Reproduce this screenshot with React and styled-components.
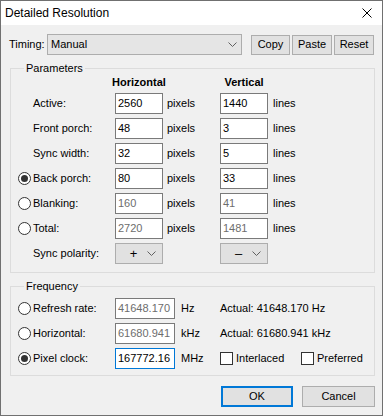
import { Fragment } from "react";
import styled, { createGlobalStyle } from "styled-components";

const GlobalStyle = createGlobalStyle`
  html, body {
    margin: 0;
    padding: 0;
    background: #f0f0f0;
  }
  body {
    font-family: "Liberation Sans", Arial, sans-serif;
    font-size: 11px;
    line-height: 13px;
    color: #000;
  }
`;

const Window = styled.div`
  box-sizing: border-box;
  width: 383px;
  height: 416px;
  border: 1px solid #707070;
  background: #f0f0f0;
  display: flex;
  flex-direction: column;
`;

const TitleBar = styled.div`
  height: 24px;
  background: #fff;
  display: flex;
  align-items: center;
  justify-content: space-between;
  padding: 0 10px 0 4px;
  font-size: 12px;
`;

const Body = styled.div`
  flex: 1;
  display: flex;
  flex-direction: column;
  padding: 9px 7px 0 8px;
`;

const TimingRow = styled.div`
  display: flex;
  align-items: center;
  height: 21px;
`;

const TimingLabel = styled.span`
  width: 38px;
`;

const Combo = styled.div`
  box-sizing: border-box;
  width: 195px;
  height: 21px;
  border: 1px solid #adadad;
  background: #e5e5e5;
  display: flex;
  align-items: center;
  justify-content: space-between;
  padding: 0 4px 0 3px;
  margin-right: 9px;
`;

const SmallButton = styled.div`
  box-sizing: border-box;
  width: ${(p) => p.$w}px;
  height: 20px;
  border: 1px solid #adadad;
  background: #e1e1e1;
  display: flex;
  align-items: center;
  justify-content: center;
  margin-left: ${(p) => p.$ml || 0}px;
`;

const Group = styled.fieldset`
  margin: ${(p) => p.$mt}px 0 0 1px;
  padding: ${(p) => p.$pt}px 0 ${(p) => p.$pb}px 7px;
  border: 1px solid #dcdcdc;
  min-width: 0;
`;

const Legend = styled.legend`
  margin-left: 6px;
  padding: 0 2px;
  line-height: 13px;
`;

const Grid = styled.div`
  display: grid;
  grid-template-columns: ${(p) => p.$cols};
  grid-template-rows: ${(p) => p.$rows};
  row-gap: 4px;
  align-items: center;
`;

const Header = styled.div`
  grid-column: ${(p) => p.$col};
  display: flex;
  justify-content: center;
  font-weight: bold;
  white-space: nowrap;
`;

const Label = styled.span`
  grid-column: 2;
  white-space: nowrap;
`;

const Unit = styled.span`
  padding-left: ${(p) => p.$pl}px;
  white-space: nowrap;
`;

const Field = styled.div`
  box-sizing: border-box;
  width: ${(p) => p.$w}px;
  height: 21px;
  border: 1px solid ${(p) => (p.$focus ? "#0078d7" : "#7a7a7a")};
  background: #fff;
  color: ${(p) => (p.$disabled ? "#6d6d6d" : "#000")};
  padding: 0 2px;
  line-height: 19px;
  white-space: nowrap;
  overflow: hidden;
`;

const Select = styled.div`
  box-sizing: border-box;
  width: 48px;
  height: 21px;
  border: 1px solid #adadad;
  background: #e1e1e1;
  display: flex;
  align-items: center;
  padding: 0 6px 0 0;
`;

const SelectValue = styled.span`
  flex: 1;
  text-align: center;
  font-size: 13px;
  padding-left: 4px;
`;

const Radio = styled.span`
  grid-column: 1;
  box-sizing: border-box;
  width: 13px;
  height: 13px;
  border-radius: 50%;
  border: 1px solid #333;
  background: #fff;
  display: flex;
  align-items: center;
  justify-content: center;
  &::after {
    content: "";
    display: ${(p) => (p.$checked ? "block" : "none")};
    width: 7px;
    height: 7px;
    border-radius: 50%;
    background: #333;
  }
`;

const CheckRow = styled.div`
  display: flex;
  align-items: center;
`;

const CheckItem = styled.label`
  display: flex;
  align-items: center;
  gap: 3px;
  width: ${(p) => p.$w}px;
`;

const Box = styled.span`
  box-sizing: border-box;
  width: 13px;
  height: 13px;
  border: 1px solid #333;
  background: #fff;
`;

const ButtonRow = styled.div`
  display: flex;
  justify-content: flex-end;
  gap: 9px;
  margin-top: 10px;
`;

const DialogButton = styled.div`
  box-sizing: border-box;
  width: ${(p) => p.$w}px;
  height: 21px;
  border: ${(p) => (p.$default ? "2px solid #0078d7" : "1px solid #adadad")};
  background: #e1e1e1;
  display: flex;
  align-items: center;
  justify-content: center;
`;

function Chevron() {
  return (
    <svg width="9" height="5" viewBox="0 0 9 5">
      <polyline points="0.5,0.5 4.5,4.5 8.5,0.5" fill="none" stroke="#606060" strokeWidth="1" />
    </svg>
  );
}

function CloseIcon() {
  return (
    <svg width="10" height="10" viewBox="0 0 10 10">
      <path d="M0.5 0.5 L9.5 9.5 M9.5 0.5 L0.5 9.5" stroke="#000" strokeWidth="1" />
    </svg>
  );
}

const params = [
  { label: "Active:", h: "2560", v: "1440" },
  { label: "Front porch:", h: "48", v: "3" },
  { label: "Sync width:", h: "32", v: "5" },
  { label: "Back porch:", h: "80", v: "33", radio: true, checked: true },
  { label: "Blanking:", h: "160", v: "41", radio: true, disabled: true },
  { label: "Total:", h: "2720", v: "1481", radio: true, disabled: true },
];

const freqs = [
  { label: "Refresh rate:", value: "41648.170", unit: "Hz", actual: "Actual: 41648.170 Hz", disabled: true },
  { label: "Horizontal:", value: "61680.941", unit: "kHz", actual: "Actual: 61680.941 kHz", disabled: true },
  { label: "Pixel clock:", value: "167772.16", unit: "MHz", checked: true, focus: true },
];

export default function App() {
  return (
    <>
      <GlobalStyle />
      <Window>
        <TitleBar>
          <span>Detailed Resolution</span>
          <CloseIcon />
        </TitleBar>
        <Body>
          <TimingRow>
            <TimingLabel>Timing:</TimingLabel>
            <Combo>
              <span>Manual</span>
              <Chevron />
            </Combo>
            <SmallButton $w={39}>Copy</SmallButton>
            <SmallButton $w={40} $ml={2}>Paste</SmallButton>
            <SmallButton $w={40} $ml={2}>Reset</SmallButton>
          </TimingRow>

          <Group $mt={7} $pt={0} $pb={8}>
            <Legend>Parameters</Legend>
            <Grid $cols="15px 82px 48px 57px 48px auto" $rows="14px repeat(7, 21px)">
              <Header $col={3}>Horizontal</Header>
              <Header $col={5}>Vertical</Header>
              <span />
              {params.map((r) => (
                <Fragment key={r.label}>
                  {r.radio && <Radio $checked={r.checked} />}
                  <Label>{r.label}</Label>
                  <Field $w={48} $disabled={r.disabled}>{r.h}</Field>
                  <Unit $pl={4}>pixels</Unit>
                  <Field $w={48} $disabled={r.disabled}>{r.v}</Field>
                  <Unit $pl={5}>lines</Unit>
                </Fragment>
              ))}
              <Label>Sync polarity:</Label>
              <Select>
                <SelectValue>+</SelectValue>
                <Chevron />
              </Select>
              <span />
              <Select>
                <SelectValue>–</SelectValue>
                <Chevron />
              </Select>
            </Grid>
          </Group>

          <Group $mt={7} $pt={5} $pb={6}>
            <Legend>Frequency</Legend>
            <Grid $cols="15px 82px 60px 45px auto" $rows="repeat(3, 21px)">
              {freqs.map((r) => (
                <Fragment key={r.label}>
                  <Radio $checked={r.checked} />
                  <Label>{r.label}</Label>
                  <Field $w={60} $disabled={r.disabled} $focus={r.focus}>{r.value}</Field>
                  <Unit $pl={6}>{r.unit}</Unit>
                  {r.actual ? (
                    <span>{r.actual}</span>
                  ) : (
                    <CheckRow>
                      <CheckItem $w={81}><Box />Interlaced</CheckItem>
                      <CheckItem><Box />Preferred</CheckItem>
                    </CheckRow>
                  )}
                </Fragment>
              ))}
            </Grid>
          </Group>

          <ButtonRow>
            <DialogButton $w={72} $default>OK</DialogButton>
            <DialogButton $w={73}>Cancel</DialogButton>
          </ButtonRow>
        </Body>
      </Window>
    </>
  );
}
